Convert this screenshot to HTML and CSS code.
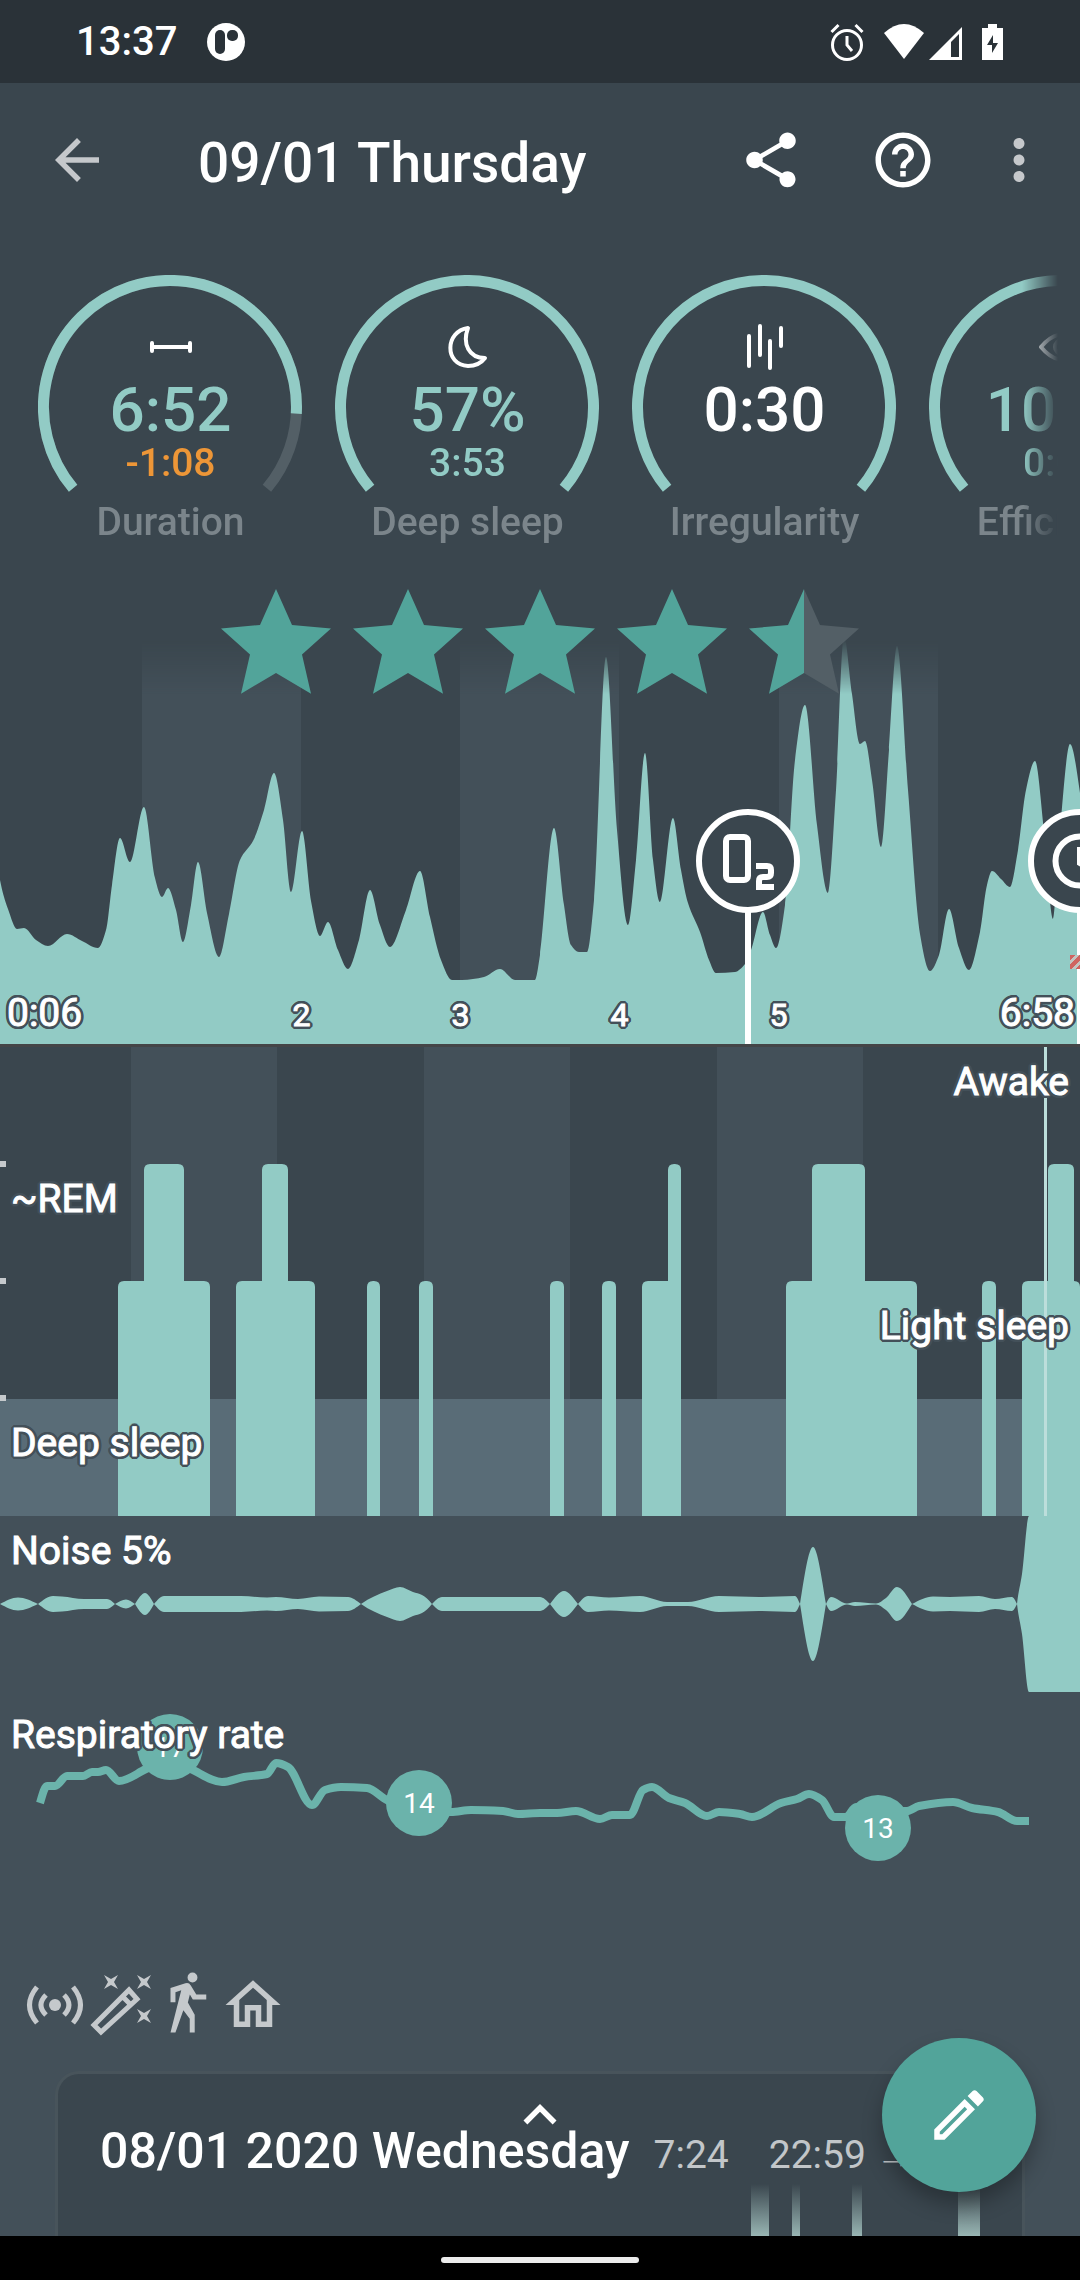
FILE: index.html
```html
<!DOCTYPE html>
<html lang="en">
<head>
<meta charset="utf-8">
<meta name="viewport" content="width=device-width, initial-scale=1">
<title>Sleep record – 09/01 Thursday</title>
<link rel="stylesheet" href="styles.css">
</head>
<body>
<div class="app">
  <div class="status">
    <span class="clock">13:37</span>
    <svg class="status-app" viewBox="0 0 38 38" aria-hidden="true"><circle cx="19" cy="19" r="19" fill="#fff"/><rect x="8" y="7" width="10" height="24" rx="5" fill="#2a3238"/><rect x="20" y="7" width="11" height="11" rx="5" fill="#2a3238"/></svg>
    <svg class="status-icons" viewBox="0 0 174 38" aria-hidden="true">
      <g fill="none" stroke="#fff" stroke-width="3"><circle cx="17" cy="22" r="14.500"/><path d="M17 13v9l5 6M1.500 9l7-7M32.500 9l-7-7"/></g>
      <path d="M74 36L54 10q20-18 40 0z" fill="#fff"/>
      <path d="M99 37L132 4v33z" fill="#fff"/><path d="M121 19l8-8v23h-8z" fill="#2a3238"/>
      <path d="M152 5h6V1h9v4h6v32h-21z" fill="#fff"/><path d="M163 12l-6 10h5v8l6-10h-5z" fill="#2a3238"/>
    </svg>
  </div>

  <header class="bar">
    <button class="icon-btn dim" aria-label="Back"><svg viewBox="0 0 24 24"><path d="M20 11H7.830l5.590-5.590L12 4l-8 8 8 8 1.410-1.410L7.830 13H20z"/></svg></button>
    <h1>09/01 Thursday</h1>
    <button class="icon-btn share" aria-label="Share"><svg viewBox="0 0 24 24"><path d="M18 16.080c-.76 0-1.440.3-1.960.77L8.910 12.700c.05-.23.09-.46.09-.7s-.04-.47-.09-.7l7.050-4.110c.54.5 1.250.81 2.040.81 1.660 0 3-1.340 3-3s-1.340-3-3-3-3 1.340-3 3c0 .24.04.47.09.7L8.040 9.810C7.500 9.310 6.790 9 6 9c-1.660 0-3 1.340-3 3s1.340 3 3 3c.79 0 1.500-.31 2.040-.81l7.120 4.160c-.05.21-.08.43-.08.65 0 1.610 1.310 2.920 2.920 2.920s2.920-1.310 2.920-2.920-1.310-2.920-2.920-2.920z"/></svg></button>
    <button class="icon-btn help" aria-label="Help"><svg viewBox="0 0 24 24"><path d="M11 18h2v-2h-2v2zm1-16C6.480 2 2 6.480 2 12s4.480 10 10 10 10-4.480 10-10S17.520 2 12 2zm0 18c-4.410 0-8-3.590-8-8s3.590-8 8-8 8 3.590 8 8-3.590 8-8 8zm0-14c-2.210 0-4 1.790-4 4h2c0-1.100.9-2 2-2s2 .9 2 2c0 2-3 1.750-3 5h2c0-2.250 3-2.500 3-5 0-2.210-1.790-4-4-4z"/></svg></button>
    <button class="icon-btn dim" aria-label="More options"><svg viewBox="0 0 24 24"><path d="M12 8c1.100 0 2-.9 2-2s-.9-2-2-2-2 .9-2 2 .9 2 2 2zm0 2c-1.100 0-2 .9-2 2s.9 2 2 2 2-.9 2-2-.9-2-2-2zm0 6c-1.100 0-2 .9-2 2s.9 2 2 2 2-.9 2-2-.9-2-2-2z"/></svg></button>
  </header>

  <section class="gauges" aria-label="Scores">
    <article class="gauge">
      <svg class="dial" viewBox="0 0 264 220" aria-hidden="true"><path class="rest" d="M35.100 213.300A126.500 126.500 0 1 1 228.900 213.300"/><path d="M35.100 213.300A126.500 126.500 0 1 1 258.300 138.600"/></svg>
      <div class="readout">
        <svg class="glyph" viewBox="0 0 50 50" aria-hidden="true"><path d="M6 25h38M6 21v8M44 21v8"/></svg>
        <b>6:52</b><span class="warn">-1:08</span><h2>Duration</h2>
      </div>
    </article>
    <article class="gauge">
      <svg class="dial" viewBox="0 0 264 220" aria-hidden="true"><path d="M35.100 213.300A126.500 126.500 0 1 1 228.900 213.300"/></svg>
      <div class="readout">
        <svg class="glyph" viewBox="0 0 50 50" aria-hidden="true"><path d="M25 6C2 9 1 43 25 44Q36 44 42 36C26 36 19 22 25 6z"/></svg>
        <b>57%</b><span>3:53</span><h2>Deep sleep</h2>
      </div>
    </article>
    <article class="gauge">
      <svg class="dial" viewBox="0 0 264 220" aria-hidden="true"><path d="M35.100 213.300A126.500 126.500 0 1 1 228.900 213.300"/></svg>
      <div class="readout">
        <svg class="glyph" viewBox="0 0 50 50" aria-hidden="true"><path d="M9 14v30M20 4v29M30 19v27M41 6v18"/></svg>
        <b class="neutral">0:30</b><span></span><h2>Irregularity</h2>
      </div>
    </article>
    <article class="gauge">
      <svg class="dial" viewBox="0 0 264 220" aria-hidden="true"><path d="M35.100 213.300A126.500 126.500 0 1 1 228.900 213.300"/></svg>
      <div class="readout">
        <svg class="glyph" viewBox="0 0 50 50" aria-hidden="true"><path d="M4 25Q25 0 46 25Q25 50 4 25z"/><circle cx="25" cy="25" r="7"/></svg>
        <b>100%</b><span>0:00</span><h2>Efficiency</h2>
      </div>
    </article>
  </section>

  <section class="activity" aria-label="Activity">
    <svg class="plot faded" viewBox="0 0 1080 484" preserveAspectRatio="none" aria-hidden="true">
      <path class="band" d="M142 0h159v484h-159zM460 0h159v484h-159zM779 0h159v484h-159z"/>
      <path class="fill" id="activity"/>
    </svg>
    <div class="pin" style="left:69.26%">
      <svg viewBox="0 0 104 104" role="img" aria-label="Blood oxygen"><circle class="ring" cx="52" cy="52" r="49"/><g fill="none" stroke="#fff" stroke-width="6"><rect x="30" y="28" width="22" height="43" rx="4"/><path d="M60 57h11q4 0 4 4v3q0 4-4 4h-4q-4 0-4 4v6h15"/></g></svg>
    </div>
    <div class="pin" style="left:100%">
      <svg viewBox="0 0 104 104" role="img" aria-label="Alarm"><circle class="ring" cx="52" cy="52" r="49"/><circle cx="52" cy="52" r="24.500" fill="none" stroke="#fff" stroke-width="6"/><path d="M52 38v16l12 7" fill="none" stroke="#fff" stroke-width="6"/></svg>
    </div>
    <div class="snooze"></div>
    <svg class="stars" viewBox="0 0 638 105" role="img" aria-label="4.5 of 5 stars">
      <defs><path id="star" d="M55 0l16 36 39 3.500-29 26 9 39.200-35-20.700-35 20.700 9-39.200-29-26L39 36z"/></defs>
      <g fill="#52a49a"><use href="#star"/><use href="#star" x="132"/><use href="#star" x="264"/><use href="#star" x="396"/><path d="M583 0v84l-35 20.700 9-39.200-29-26L567 36z"/></g>
      <path d="M583 0l16 36 39 3.500-29 26 9 39.200-35-20.700z" fill="#535f66"/>
    </svg>
    <div class="hours">
      <span class="edge">0:06</span><span>2</span><span>3</span><span>4</span><span>5</span><span class="edge end">6:58</span>
    </div>
  </section>

  <section class="stages" aria-label="Sleep stages">
    <svg class="plot" viewBox="0 0 1080 469" preserveAspectRatio="none" aria-hidden="true">
      <path class="band" d="M131 0h146v469h-146zM424 0h146v469h-146zM717 0h146v469h-146z"/>
      <path class="deep" d="M0 352h1080v117H0z"/>
      <g class="fill" id="stages"></g>
      <path d="M1044 0h3v469h-3z" fill="#bcdedb"/>
      <path d="M0 114h6v6H0zM0 231h6v6H0zM0 348h6v6H0z" fill="#c5c9cc"/>
    </svg>
    <div class="levels">
      <span class="right">Awake</span><span>~REM</span><span class="right low">Light sleep</span><span class="low">Deep sleep</span>
    </div>
  </section>

  <section class="noise">
    <svg class="plot" viewBox="0 0 1080 176" preserveAspectRatio="none" aria-hidden="true"><path class="fill" id="noise"/></svg>
    <h2>Noise 5%</h2>
  </section>

  <section class="breath">
    <svg class="plot" viewBox="0 0 1080 280" preserveAspectRatio="none" aria-hidden="true"><path class="line" id="breath"/></svg>
    <span class="rate" style="left:15.74%;top:55px">17</span>
    <span class="rate" style="left:38.8%;top:111px">14</span>
    <span class="rate" style="left:81.3%;top:136px">13</span>
    <h2>Respiratory rate</h2>
  </section>

  <div class="tags">
    <svg viewBox="0 0 66 66" role="img" aria-label="Sonar"><circle cx="33" cy="33" r="6"/><g fill="none" stroke="#c5c9cc" stroke-width="5"><path d="M24 23q-10 10 0 20M42 23q10 10 0 20M15 15q-15 18 0 36M51 15q15 18 0 36"/></g></svg>
    <svg class="wand" viewBox="0 0 66 66" role="img" aria-label="Lullaby"><path d="M16 3l7 4 7-4-4 7 4 7-7-4-7 4 4-7zM49 3l7 4 7-4-4 7 4 7-7-4-7 4 4-7zM49 37l7 4 7-4-4 7 4 7-7-4-7 4 4-7z"/><path d="M6 53L41 18l8 9-36 33zM34 24l9 9" fill="none" stroke="#c5c9cc" stroke-width="5"/></svg>
    <svg viewBox="0 0 24 24" role="img" aria-label="Active day"><path d="M14.120 10H19V8.200h-3.620l-2-3.330a1.710 1.710 0 0 0-1.960-.76L6 5.800V11h1.800V7.330l2.110-.66L6 22h1.800l2.870-8.110L13 17v5h1.800v-6.410l-2.490-4.540.73-2.870M14 3.800a1.800 1.800 0 1 0 0-3.600 1.800 1.800 0 0 0 0 3.600z"/></svg>
    <svg viewBox="0 0 24 24" role="img" aria-label="At home"><path d="M12 5.690l5 4.500V18h-2v-6H9v6H7v-7.810l5-4.500M12 3L2 12h3v8h6v-6h2v6h6v-8h3"/></svg>
  </div>

  <article class="card">
    <button class="expand" aria-label="Expand"><svg viewBox="0 0 24 24"><path d="M12 8l-6 6 1.410 1.410L12 10.830l4.590 4.580L18 14z"/></svg></button>
    <div class="card-head"><h2>08/01 2020 Wednesday</h2><span>7:24</span><span class="span">22:59 →</span></div>
    <svg class="mini" viewBox="0 0 880 55" preserveAspectRatio="none" aria-hidden="true">
      <defs><linearGradient id="rise" gradientUnits="userSpaceOnUse" x1="0" y1="0" x2="0" y2="55"><stop stop-color="#98b5b3" stop-opacity="0"/><stop offset="1" stop-color="#98b5b3"/></linearGradient></defs>
      <path d="M651 0h18v55h-18zM692 0h8v55h-8zM752 0h10v55h-10zM858 0h22v55h-22z" fill="url(#rise)"/>
    </svg>
  </article>

  <button class="fab" aria-label="Edit"><svg viewBox="0 0 24 24"><path d="M14.060 9.020l.92.92L5.920 19H5v-.92l9.060-9.060M17.660 3c-.25 0-.51.1-.7.29l-1.830 1.830 3.750 3.750 1.830-1.830c.39-.39.39-1.020 0-1.410l-2.340-2.340c-.2-.2-.45-.29-.71-.29zm-3.600 3.190L3 17.250V21h3.750L17.810 9.940l-3.750-3.750z"/></svg></button>
  <div class="nav"><span></span></div>
</div>
<script src="charts.js"></script>
</body>
</html>
```
FILE: charts.js
```js
// Monotone cubic through the points, so peaks stay where the samples are.
function curve(p, start) {
  const n = p.length, d = [], m = [];
  for (let i = 0; i < n - 1; i++) d[i] = (p[i + 1][1] - p[i][1]) / (p[i + 1][0] - p[i][0]);
  for (let i = 1; i < n - 1; i++) m[i] = d[i - 1] * d[i] <= 0 ? 0 : 2 * d[i - 1] * d[i] / (d[i - 1] + d[i]);
  m[0] = d[0] * 1.4;
  m[n - 1] = d[n - 2] * 1.4;
  let s = start + p[0].join(' ');
  for (let i = 0; i < n - 1; i++) {
    const h = (p[i + 1][0] - p[i][0]) / 3;
    s += `C${p[i][0] + h} ${p[i][1] + h * m[i]} ${p[i + 1][0] - h} ${p[i + 1][1] - h * m[i + 1]} ${p[i + 1].join(' ')}`;
  }
  return s;
}
const pairs = t => t.trim().split(/\s+/).map(v => v.split(',').map(Number));
const draw = (id, d) => document.getElementById(id).setAttribute('d', d);

const activity = pairs(`0,320 8,349 17,369 24,368 36,380 48,386 67,374 82,381 98,388 106,370 112,325 120,278 130,302 144,247
  155,318 162,337 168,328 176,350 183,382 191,345 198,302 207,353 219,397 229,354 240,300 253,281 264,250 274,213 283,260 291,332 302,271
  311,341 320,376 328,362 338,390 348,409 359,380 370,330 380,365 390,387 406,350 420,311 430,357 441,400 452,420 462,420 484,417
  500,409 515,420 535,420 540,395 554,268 564,345 571,385 579,392 587,392 594,340 606,97 617,270 628,365 636,300 645,193 653,300 660,342
  673,258 681,310 688,343 700,372 709,400 716,413 735,412 745,404 751,390 763,352 770,375 776,388 785,345 795,200 805,145 817,265 828,333
  836,230 844,76 852,134 860,184 865,181 872,220 881,287 889,190 897,86 908,230 920,374 930,411 939,395 949,349 959,388 969,410
  980,372 987,325 992,311 1001,319 1010,327 1018,290 1026,230 1035,201 1044,270 1053,359 1060,270 1070,184 1080,233`);
draw('activity', curve(activity, 'M') + 'V484H0Z');

// Each sound event runs from silence to silence and is mirrored about the axis.
const events = ['0,0 18,6.5 38,0', '38,0 53,8 62,7.5 84,5 107,5 115,0', '115,0 126,4.5 135,0', '135,0 145,11 154,0',
  '154,0 164,8 241,8 267,6.5 276,7 298,5 319,7.5 348,7 361,0', '361,0 387,13 400,17 413,12 422,9 432,0',
  '432,0 442,7 540,7 550,0', '550,0 564,13 578,0', '578,0 588,8 609,6.5 640,8 667,2 688,2 719,8 759,7 795,8 800,0',
  '800,0 813,57 826,0', '826,0 831,7 847,.5 855,2 876,.5 886,6 897,17 912,0',
  '912,0 933,7.5 950,7 979,8 995,5 1012,7 1017,0', '1017,0 1022,30 1029,88 1080,88'];
draw('noise', events.map(e => {
  const p = pairs(e);
  return curve(p.map(([x, h]) => [x, 88 - h]), 'M') + curve(p.map(([x, h]) => [x, 88 + h]).reverse(), 'L') + 'Z';
}).join(''));

draw('breath', curve(pairs(`40,111 47,94 55,94 67,84 83,84 92,80 98,80 106,78 119,89 146,77 170,66 191,77 222,90 244,85 267,82
  276,71 288,75 312,113 325,98 341,95 367,96 387,108 419,120 451,120 471,118 503,119 518,122 540,121 557,121 576,119 600,127 612,123
  630,123 643,98 652,95 669,106 685,111 707,124 719,120 740,122 752,125 781,111 797,107 809,102 822,108 834,125 846,125 856,115
  880,118 907,119 919,114 953,110 972,116 998,120 1017,129 1029,129`), 'M'));

// [left, right, top] of each block; the night is read as steps above deep sleep.
const blocks = [[118, 210, 234], [144, 184, 117], [236, 315, 234], [262, 288, 117], [367, 380, 234], [419, 433, 234],
  [550, 564, 234], [602, 616, 234], [642, 681, 234], [668, 681, 117], [786, 917, 234], [812, 865, 117],
  [982, 996, 234], [1022, 1080, 234], [1048, 1074, 117]];
document.getElementById('stages').innerHTML = blocks.map(([l, r, t]) =>
  `<path d="M${l} 469V${t + 6}q0-6 6-6H${r - 6}q6 0 6 6V469z"/>`).join('');
```
FILE: styles.css
```css
* { box-sizing: border-box; }

:root {
  --ground: #3a464e;
  --raised: #435059;
  --mint: #92cbc5;
  --teal: #52a49a;
}

body {
  margin: 0;
  background: var(--raised);
  color: #fff;
  font-family: Roboto, "Noto Sans", sans-serif;
}

h1, h2 { margin: 0; font-weight: 500; }
button { padding: 0; border: 0; background: none; color: inherit; font: inherit; }
svg { display: block; }

.app {
  position: relative;
  display: flex;
  flex-direction: column;
  min-height: 100vh;
  overflow: hidden;
}
.app > * { position: relative; }

/* Dark ground behind the app bar and the fading row of gauges. */
.app::before {
  content: "";
  position: absolute;
  inset: 0 0 auto;
  height: 700px;
  background: var(--ground);
}

.status {
  display: flex;
  align-items: center;
  height: 83px;
  padding: 0 76px;
  background: #2a3238;
}
.clock { margin-right: 30px; font-size: 40px; font-weight: 500; }
.status-app { width: 38px; height: 38px; }
.status-icons { width: 174px; height: 38px; margin-left: auto; }

.bar {
  display: flex;
  align-items: center;
  height: 154px;
  padding: 0 28px 0 44px;
}
.bar h1 { flex: 1; margin-left: 88px; padding-top: 6px; font-size: 55px; line-height: 64px; }
.icon-btn { width: 66px; height: 66px; fill: #fff; }
.icon-btn.dim { fill: #c5c8cb; }
.share { margin-right: 66px; }
.help { margin-right: 50px; }

.gauges {
  display: flex;
  margin-right: 22px;
  padding: 38px 0 0 22px;
  overflow: hidden;
  mask-image: linear-gradient(to left, transparent, #000 36px);
}
.gauge { display: grid; flex: 0 0 297px; }
.dial, .readout { grid-area: 1 / 1; }
.dial {
  width: 264px;
  height: 220px;
  margin-left: 16px;
  fill: none;
  stroke: var(--mint);
  stroke-width: 11;
}
.dial .rest { stroke: #535f66; }
.readout {
  display: flex;
  flex-direction: column;
  align-items: center;
  padding-top: 47px;
  color: var(--mint);
  font-weight: 500;
}
.glyph { width: 50px; height: 50px; fill: none; stroke: #fff; stroke-width: 4; stroke-linecap: round; stroke-linejoin: round; }
.readout b { margin-top: 6px; font-size: 62px; font-weight: 500; line-height: 64px; }
.readout span { height: 44px; font-size: 39px; line-height: 42px; }
.readout h2 { margin-top: 13px; color: #7b858b; font-size: 39px; line-height: 46px; }
.readout .neutral { color: #fff; }
.readout .warn { color: #ed9637; }

.activity {
  display: grid;
  height: 502px;
  padding-top: 15px;
  border-bottom: 3px solid #444547;
  background: var(--ground);
  overflow: hidden;
}
.plot { grid-area: 1 / 1; width: 100%; height: 100%; }
.band { fill: var(--raised); }
.fill { fill: var(--mint); }
.deep { fill: #596c77; }
.faded { mask-image: linear-gradient(transparent 80px, #000 134px); }
.stars {
  z-index: 1;
  grid-area: 1 / 1;
  width: 638px;
  height: 105px;
  margin-top: 29px;
  justify-self: center;
}

.pin {
  position: absolute;
  bottom: 0;
  width: 104px;
  height: 235px;
  transform: translateX(-50%);
  background: linear-gradient(#fff, #fff) center bottom / 6px 132px no-repeat;
}
.pin svg { width: 104px; height: 104px; }
.ring { fill: var(--ground); stroke: #fff; stroke-width: 6; }
.snooze {
  position: absolute;
  right: 0;
  bottom: 75px;
  width: 10px;
  height: 14px;
  background: repeating-linear-gradient(135deg, #cf6460 0 4px, #c3c5c2 4px 7px);
}

.hours {
  grid-area: 1 / 1;
  align-self: end;
  display: grid;
  grid-template-columns: 222fr 159fr 159fr 159fr 159fr 222fr;
  align-items: baseline;
  padding-bottom: 6px;
  text-align: center;
  font-size: 32px;
  line-height: 46px;
}
.edge { padding: 0 5px 0 7px; font-size: 39px; text-align: left; }
.edge.end { text-align: right; }

/* Chart labels: slightly thickened white text with an outline in the panel colour. */
.hours, .levels, .noise h2, .breath h2 {
  position: relative;
  font-weight: 400;
  -webkit-text-stroke: 1px #fff;
  text-shadow:
    3px 0 var(--raised), -3px 0 var(--raised), 0 3px var(--raised), 0 -3px var(--raised),
    2px 2px var(--raised), -2px 2px var(--raised), 2px -2px var(--raised), -2px -2px var(--raised),
    3px 1px var(--raised), -3px 1px var(--raised), 3px -1px var(--raised), -3px -1px var(--raised),
    1px 3px var(--raised), -1px 3px var(--raised), 1px -3px var(--raised), -1px -3px var(--raised);
}

.stages { display: grid; height: 469px; background: var(--ground); }
.levels {
  grid-area: 1 / 1;
  display: grid;
  grid-template-rows: repeat(4, 1fr);
  padding: 0 11px;
  font-size: 39px;
  line-height: 46px;
}
.levels span { padding-top: 12px; }
.levels .right { text-align: right; }
.levels .low { padding-top: 21px; }

.noise, .breath { display: grid; background: var(--raised); }
.noise { height: 176px; }
.breath { height: 280px; }
.noise h2, .breath h2 {
  grid-area: 1 / 1;
  padding: 12px 11px 0;
  font-size: 39px;
  line-height: 46px;
}
.breath h2 { padding-top: 20px; }
.line { fill: none; stroke: #6bb3ab; stroke-width: 8; }
.rate {
  position: absolute;
  width: 66px;
  height: 66px;
  border-radius: 50%;
  transform: translate(-50%, -50%);
  background: #6bb3ab;
  font-size: 28px;
  line-height: 68px;
  text-align: center;
}

.tags { display: flex; padding-left: 22px; fill: #c5c9cc; }
.tags svg { width: 66px; height: 66px; }
.wand { overflow: visible; }

.card {
  display: flex;
  flex: 1;
  flex-direction: column;
  margin: 33px 55px 0;
  padding: 48px 42px 0;
  border: 3px solid #48545b;
  border-bottom: 0;
  border-radius: 24px 24px 0 0;
  background: var(--ground);
}
.expand { position: absolute; top: 8px; left: 50%; width: 66px; height: 66px; transform: translateX(-50%); fill: #fff; }
.card-head {
  display: flex;
  align-items: baseline;
  color: #c2c6c9;
  font-size: 39px;
  line-height: 58px;
  white-space: nowrap;
}
.card-head h2 { margin-right: 24px; color: #fff; font-size: 50px; }
.card-head .span { margin-left: 40px; }
.mini { flex: 1 1 40px; width: 100%; height: 40px; min-height: 0; }

.app > .fab {
  position: absolute;
  right: 44px;
  bottom: 88px;
  display: grid;
  place-items: center;
  width: 154px;
  height: 154px;
  border-radius: 50%;
  background: var(--teal);
  box-shadow: 0 12px 20px rgba(0, 0, 0, .28);
}
.fab svg { width: 66px; height: 66px; fill: #fff; }

.nav { display: grid; place-items: center; height: 44px; padding-top: 4px; background: #000; }
.nav span { width: 198px; height: 6px; border-radius: 3px; background: #ebebeb; }
```
